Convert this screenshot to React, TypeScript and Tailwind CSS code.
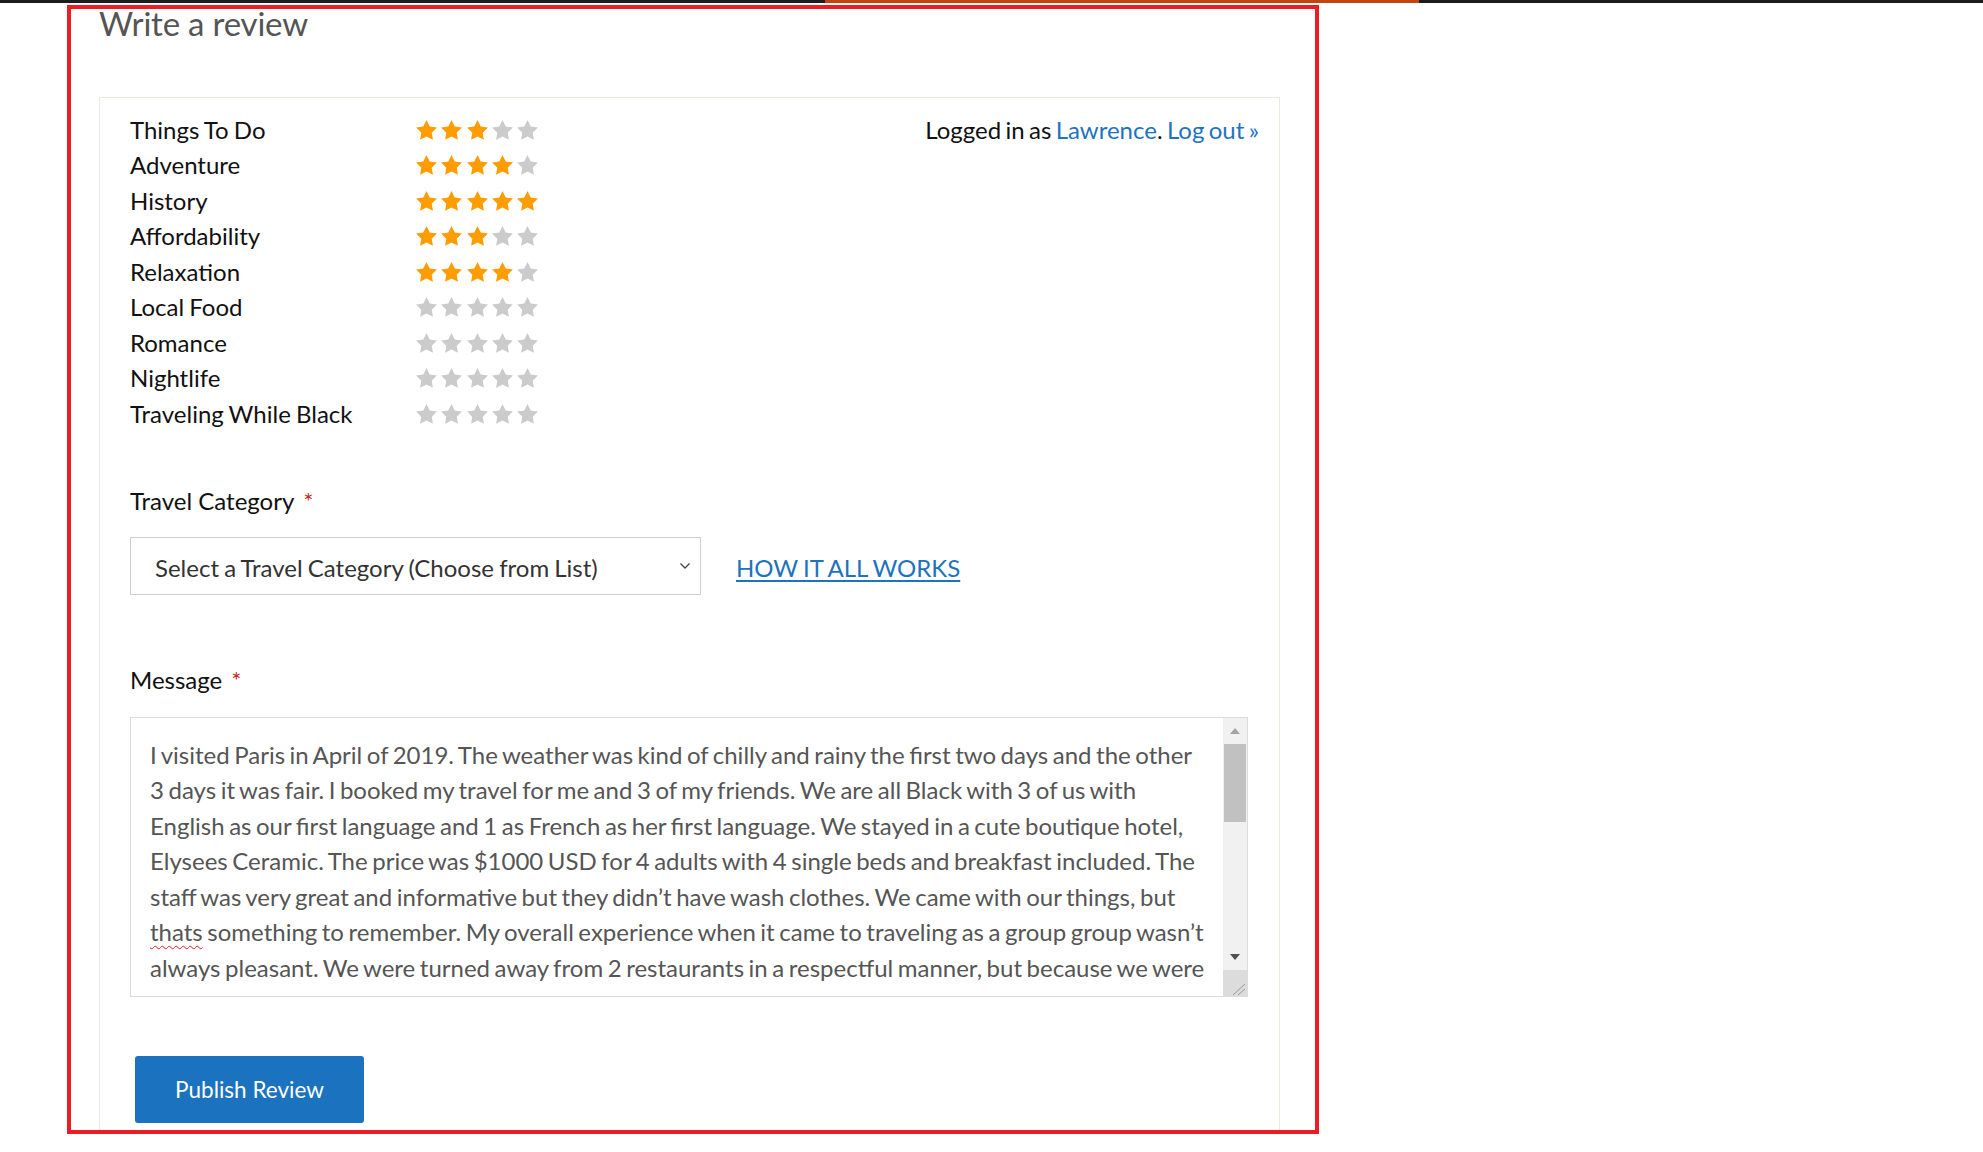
import React from "react";

const font = { fontFamily: "Lato, 'Open Sans', Arial, sans-serif" };

function Star({ on }: { on: boolean }) {
  return (
    <svg width="21" height="20" viewBox="2 2 20 19.2" className="block">
      <polygon
        points="12,2 15.09,8.26 22,9.27 17,14.14 18.18,21.02 12,17.77 5.82,21.02 7,14.14 2,9.27 8.91,8.26"
        fill={on ? "#ff9c00" : "#cbcbcb"}
      />
    </svg>
  );
}

const ratings: [string, number][] = [
  ["Things To Do", 3],
  ["Adventure", 4],
  ["History", 5],
  ["Affordability", 3],
  ["Relaxation", 4],
  ["Local Food", 0],
  ["Romance", 0],
  ["Nightlife", 0],
  ["Traveling While Black", 0],
];

const lines = [
  "I visited Paris in April of 2019. The weather was kind of chilly and rainy the first two days and the other",
  "3 days it was fair. I booked my travel for me and 3 of my friends. We are all Black with 3 of us with",
  "English as our first language and 1 as French as her first language. We stayed in a cute boutique hotel,",
  "Elysees Ceramic. The price was $1000 USD for 4 adults with 4 single beds and breakfast included. The",
  "staff was very great and informative but they didn\u2019t have wash clothes. We came with our things, but",
  null,
  "always pleasant. We were turned away from 2 restaurants in a respectful manner, but because we were",
];

export default function App() {
  return (
    <div className="relative h-[1152px] w-full overflow-hidden bg-white" style={font}>
      <div className="h-[1131px] overflow-hidden">
        {/* top bar */}
        <div className="flex h-[3px]">
          <div className="w-[825px] bg-[#1c1c1c]" />
          <div className="w-[594px] bg-[#c2440f]" />
          <div className="flex-1 bg-[#1c1c1c]" />
        </div>

        <div className="ml-[99px] w-[1181px]">
          <h2 className="mt-[1px] text-[33px] leading-[38px] font-normal text-[#555] tracking-[-0.2px]">
            Write a review
          </h2>

          <div className="mt-[55px] min-h-[1100px] border border-[#efe9dc] pl-[30px] pr-[20px] pt-[14px]">
            <div className="flex justify-between">
              <div className="flex flex-col">
                {ratings.map(([label, n]) => (
                  <div key={label} className="flex h-[35.5px] items-center">
                    <div className="w-[286px] text-[24px] text-[#111] [word-spacing:-1px]">{label}</div>
                    <div className="flex gap-[4.3px]">
                      {[0, 1, 2, 3, 4].map((i) => (
                        <Star key={i} on={i < n} />
                      ))}
                    </div>
                  </div>
                ))}
              </div>
              <div className="flex h-[35.5px] items-center text-[24px] text-[#111] [word-spacing:-1.8px]">
                Logged in as&nbsp;<span className="text-[#1e73be]">Lawrence</span>.&nbsp;
                <span className="text-[#1e73be]">Log out »</span>
              </div>
            </div>

            <div className="mt-[52px] flex h-[35.5px] items-center text-[24px] text-[#111]">
              Travel Category <span className="ml-[9px] text-[#c62828]">*</span>
            </div>

            <div className="mt-[18px] flex items-center">
              <div className="flex h-[58px] w-[571px] items-center justify-between border border-[#cfcfcf] bg-white pl-[24px] pr-[9px] pt-[3px]">
                <span className="text-[24px] text-[#333] [word-spacing:-1px]">
                  Select a Travel Category (Choose from List)
                </span>
                <svg width="12" height="8" viewBox="0 0 12 8" className="mb-[3px] block">
                  <polyline points="1.5,1.5 6,6 10.5,1.5" fill="none" stroke="#444" strokeWidth="1.3" />
                </svg>
              </div>
              <a className="ml-[35px] pt-[3px] text-[24px] text-[#1e73be] underline underline-offset-[3px] [word-spacing:-1px]">
                HOW IT ALL WORKS
              </a>
            </div>

            <div className="mt-[67px] flex h-[35.5px] items-center text-[24px] text-[#111]">
              Message <span className="ml-[9px] text-[#c62828]">*</span>
            </div>

            <div className="mt-[19px] flex h-[280px] w-[1118px] border border-[#dcdcdc] bg-white">
              <div className="flex-1 overflow-hidden pl-[19px] pt-[19px] text-[24px] leading-[35.5px] text-[#555] [word-spacing:-1.6px]">
                {lines.map((l, i) =>
                  l === null ? (
                    <div key={i} className="whitespace-nowrap">
                      <span className="underline decoration-wavy decoration-[#e02020] decoration-1 underline-offset-[4px]">
                        thats
                      </span>{" "}
                      something to remember. My overall experience when it came to traveling as a group group wasn’t
                    </div>
                  ) : (
                    <div key={i} className="whitespace-nowrap">
                      {l}
                    </div>
                  )
                )}
              </div>
              <div className="flex w-[24px] flex-col bg-[#f1f1f1]">
                <div className="flex h-[26px] items-center justify-center">
                  <svg width="10" height="6" viewBox="0 0 10 6">
                    <polygon points="5,0 10,6 0,6" fill="#a3a3a3" />
                  </svg>
                </div>
                <div className="mx-[1px] h-[78px] bg-[#c1c1c1]" />
                <div className="flex-1" />
                <div className="flex h-[26px] items-center justify-center">
                  <svg width="10" height="6" viewBox="0 0 10 6">
                    <polygon points="0,0 10,0 5,6" fill="#505050" />
                  </svg>
                </div>
                <div className="relative h-[26px] bg-[#dcdcdc]">
                  <svg width="24" height="26" viewBox="0 0 24 26" className="absolute inset-0">
                    <line x1="22" y1="14" x2="10" y2="25" stroke="#9a9a9a" strokeWidth="1" />
                    <line x1="22" y1="19" x2="15" y2="25" stroke="#9a9a9a" strokeWidth="1" />
                  </svg>
                </div>
              </div>
            </div>

            <button className="ml-[5px] mt-[59px] flex h-[67px] w-[229px] items-center justify-center rounded-[3px] bg-[#1b72be] pt-[2px] text-[22.5px] text-white">
              Publish Review
            </button>
          </div>
        </div>
      </div>

      {/* annotation outline */}
      <div className="pointer-events-none absolute left-[67px] top-[5px] h-[1129px] w-[1252px] border-[4px] border-[#ec1c24]" />
    </div>
  );
}
